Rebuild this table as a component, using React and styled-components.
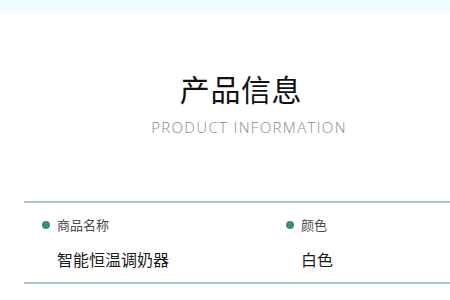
import React from "react";
import styled, { createGlobalStyle } from "styled-components";

const Global = createGlobalStyle`
  html, body { margin: 0; padding: 0; background: #ffffff; }
  body { width: 450px; height: 300px; overflow: hidden; font-family: "Noto Sans CJK SC", "Noto Sans", sans-serif; }
`;

const Page = styled.div`
  width: 450px;
  height: 300px;
  display: flex;
  flex-direction: column;
  overflow: hidden;
  background: #fff;
`;

const TopBand = styled.div`
  flex: none;
  height: 16px;
  background: linear-gradient(to bottom, #edfbfc 0%, #f3fcfc 55%, #ffffff 100%);
`;

const Header = styled.header`
  flex: none;
  display: flex;
  flex-direction: column;
  align-items: center;
  padding: 52px 0 0 22px;
  height: 185px;
  box-sizing: border-box;
`;

const Title = styled.h1`
  margin: 0;
  padding-left: 10px;
  font-family: "Noto Sans CJK SC", sans-serif;
  font-weight: 400;
  font-size: 30px;
  line-height: 40px;
  color: #111;
  letter-spacing: 0.6px;
`;

const Subtitle = styled.div`
  margin-top: 10px;
  padding-left: 26px;
  font-family: "Open Sans", "Liberation Sans", sans-serif;
  font-weight: 300;
  font-size: 15px;
  line-height: 18px;
  color: #888;
  letter-spacing: 1.35px;
`;

const Table = styled.div`
  flex: none;
  margin-left: 24px;
  display: grid;
  grid-template-columns: 245px 1fr;
`;

const Cell = styled.div`
  border-top: 2px solid #a6c8bd;
  height: 81px;
  box-sizing: border-box;
  padding: 12px 0 0 ${(p) => p.$indent}px;
  display: flex;
  flex-direction: column;
`;

const Label = styled.div`
  display: flex;
  align-items: center;
  gap: 7px;
  font-size: 13px;
  line-height: 20px;
  color: #4a4a4a;
`;

const Dot = styled.span`
  width: 8px;
  height: 8px;
  border-radius: 50%;
  background: #3c8a78;
  flex: none;
`;

const Value = styled.div`
  margin-top: 13px;
  padding-left: 15px;
  font-size: 16px;
  line-height: 22px;
  color: #1c1c1c;
`;

const rows = [
  { label: "商品名称", value: "智能恒温调奶器", col: 0 },
  { label: "颜色", value: "白色", col: 1 },
  { label: "额定电压", value: "", col: 0 },
  { label: "额定频率", value: "", col: 1 },
];

export default function App() {
  return (
    <Page>
      <Global />
      <TopBand />
      <Header>
        <Title>产品信息</Title>
        <Subtitle>PRODUCT INFORMATION</Subtitle>
      </Header>
      <Table>
        {rows.map((r, i) => (
          <Cell key={i} $indent={r.col === 0 ? 18 : 17}>
            <Label>
              <Dot />
              {r.label}
            </Label>
            {r.value && <Value>{r.value}</Value>}
          </Cell>
        ))}
      </Table>
    </Page>
  );
}
